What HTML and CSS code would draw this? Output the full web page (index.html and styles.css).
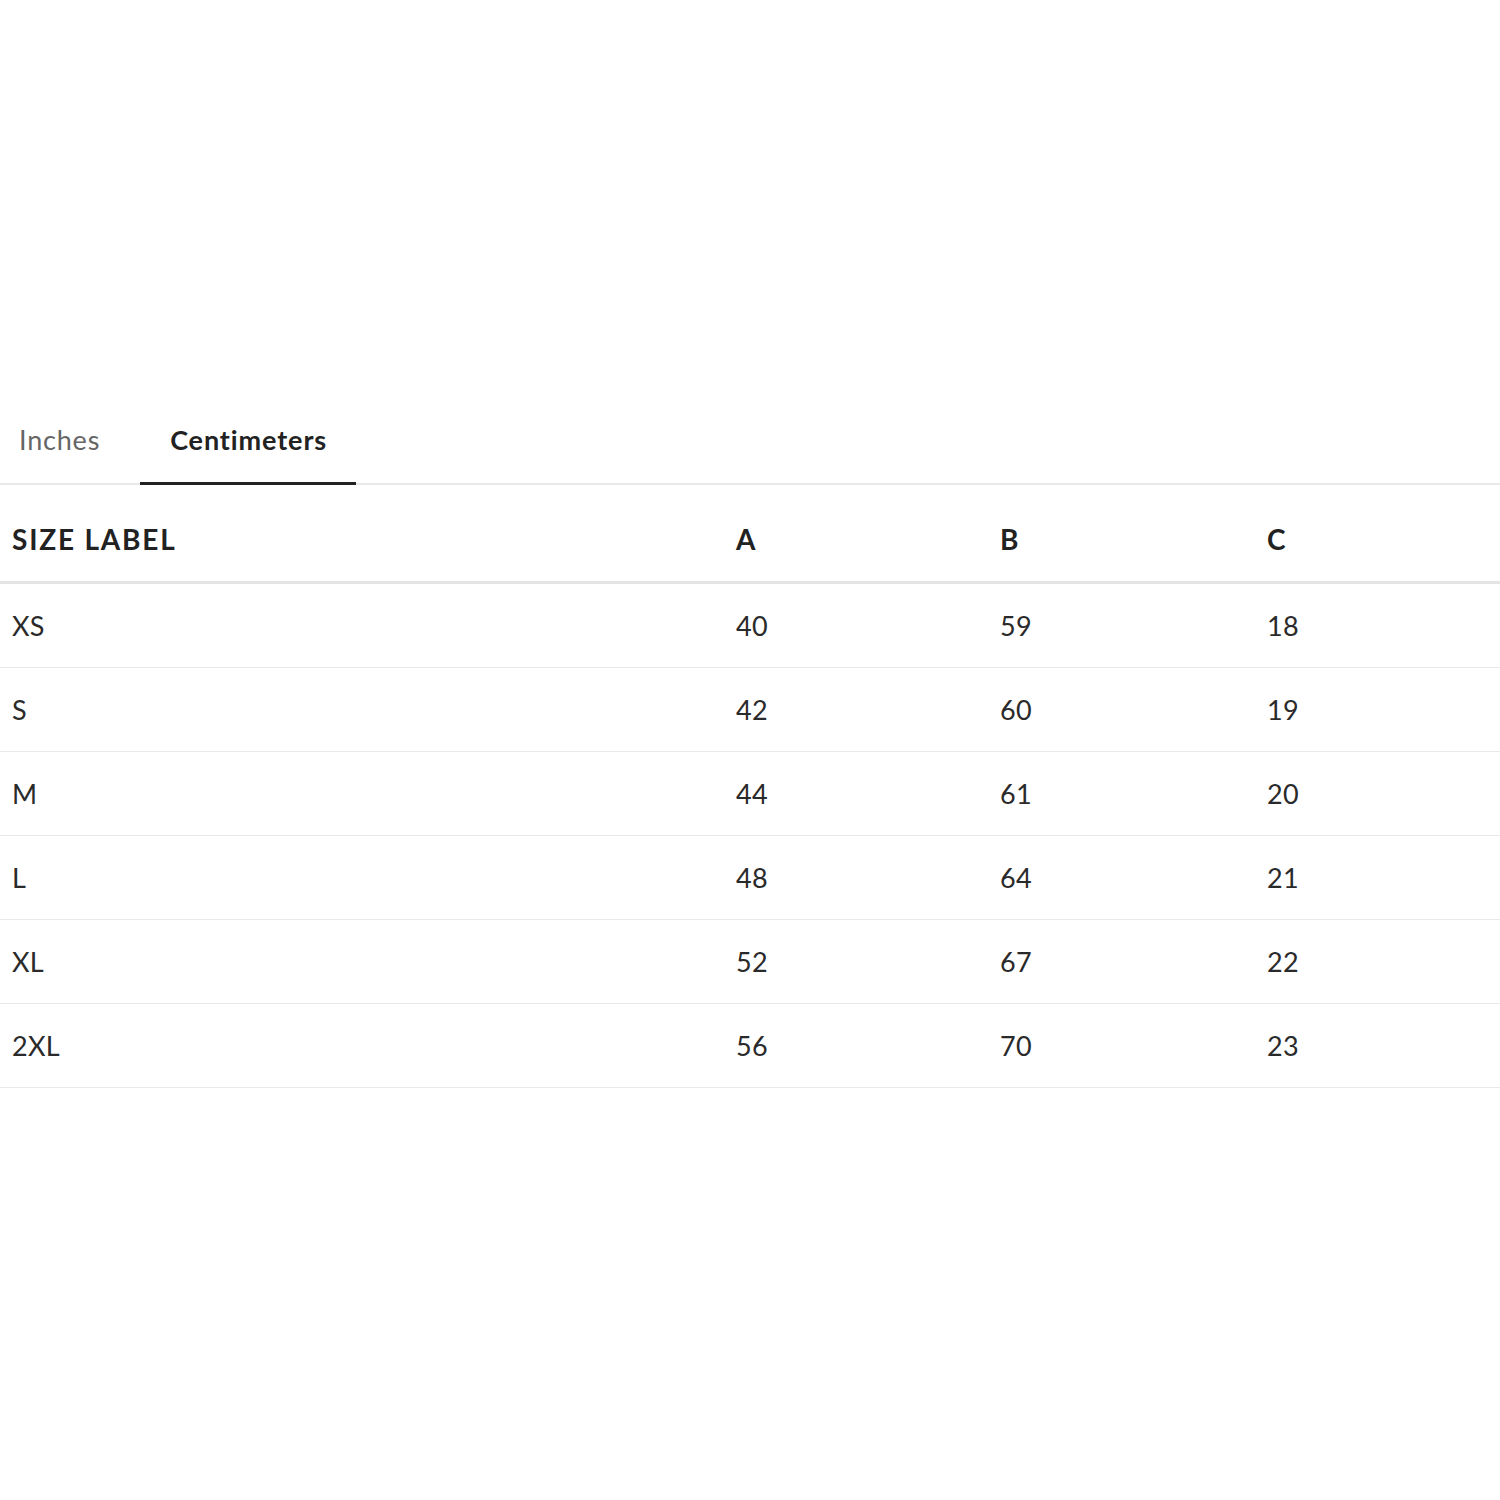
FILE: index.html
```html
<!DOCTYPE html>
<html>
<head>
<meta charset="utf-8">
<link rel="stylesheet" href="styles.css">
</head>
<body>
<div class="page">
  <div class="tabs">
    <div class="tab tab-first">Inches</div>
    <div class="tab tab-active">Centimeters</div>
  </div>
  <table class="size-table">
    <colgroup>
      <col class="col-label">
      <col class="col-a">
      <col class="col-b">
      <col class="col-c">
    </colgroup>
    <thead>
      <tr><th>SIZE LABEL</th><th>A</th><th>B</th><th>C</th></tr>
    </thead>
    <tbody>
      <tr><td>XS</td><td>40</td><td>59</td><td>18</td></tr>
      <tr><td>S</td><td>42</td><td>60</td><td>19</td></tr>
      <tr><td>M</td><td>44</td><td>61</td><td>20</td></tr>
      <tr><td>L</td><td>48</td><td>64</td><td>21</td></tr>
      <tr><td>XL</td><td>52</td><td>67</td><td>22</td></tr>
      <tr><td>2XL</td><td>56</td><td>70</td><td>23</td></tr>
    </tbody>
  </table>
</div>
</body>
</html>
```

FILE: styles.css
```css
html, body {
  margin: 0;
  padding: 0;
  background: #ffffff;
}
.page {
  padding-top: 402px;
  font-family: "Lato", "Noto Sans", sans-serif;
  color: #222222;
}
.tabs {
  display: flex;
  gap: 20px;
  border-bottom: 2px solid #e9e9e9;
}
.tab {
  padding: 20px 29px 24px 30px;
  line-height: 36px;
  font-size: 27px;
  letter-spacing: 0.8px;
  color: #666666;
  border-bottom: 3px solid transparent;
  margin-bottom: -2px;
}
.tab-first {
  padding-left: 19px;
  padding-right: 20px;
}
.tab-active {
  color: #222222;
  font-weight: 700;
  letter-spacing: 0.9px;
  border-bottom-color: #222222;
}
.size-table {
  width: 1500px;
  border-collapse: collapse;
  table-layout: fixed;
}
.col-label { width: 724px; }
.col-a { width: 264px; }
.col-b { width: 267px; }
.col-c { width: 245px; }
.size-table th {
  text-align: left;
  font-weight: 700;
  font-size: 28px;
  letter-spacing: 1.8px;
  height: 84px;
  padding: 12px 0 0 12px;
  border-bottom: 3px solid #e4e4e4;
  color: #222222;
}
.size-table td {
  font-size: 27px;
  letter-spacing: 0.3px;
  height: 83px;
  padding: 0 0 0 12px;
  border-bottom: 1px solid #e9e9e9;
  color: #2a2a2a;
}
```
